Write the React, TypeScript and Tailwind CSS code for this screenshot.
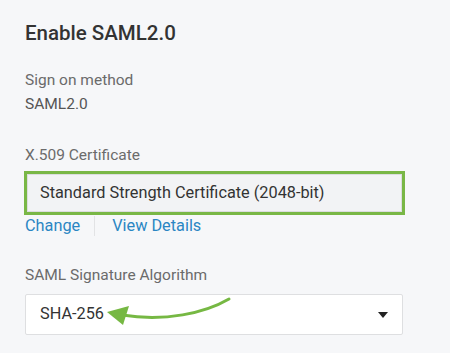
export default function App() {
  return (
    <div className="relative w-[450px] h-[353px] overflow-hidden bg-[#f6f7f9] font-['Roboto',sans-serif]">
      <div className="px-[25px] pt-[20px] flex flex-col">
        <h1 className="text-[20.5px] leading-[26px] font-medium text-[#333]">Enable SAML2.0</h1>

        <div className="mt-[24px] text-[15.5px] leading-[20px] text-[#6b6b6b]">Sign on method</div>
        <div className="mt-[4px] text-[15.5px] leading-[20px] text-[#555]">SAML2.0</div>

        <div className="mt-[31px] text-[15.5px] leading-[20px] text-[#6b6b6b]">X.509 Certificate</div>
        <div className="mt-[6px] -ml-px w-[381px] h-[44px] border-[3px] border-[#79b746]">
          <div className="h-full border border-[#dcdddf] bg-[#f2f3f5] pl-[12px] flex items-center text-[16.3px] text-[#333]">
            Standard Strength Certificate (2048-bit)
          </div>
        </div>
        <div className="mt-[1px] flex items-center text-[16.3px] leading-[20px] text-[#2a86c3]">
          <span className="pr-[14px]">Change</span>
          <span className="w-px h-[20px] bg-[#e2e3e5]" />
          <span className="pl-[17px]">View Details</span>
        </div>

        <div className="mt-[29px] text-[15.5px] leading-[20px] text-[#6b6b6b]">SAML Signature Algorithm</div>
        <div className="mt-[9px] w-[378px] h-[41px] rounded-[2px] border border-[#dedfe1] bg-white flex items-center justify-between pl-[14px] pr-[14px] text-[16.3px] text-[#333]">
          <span>SHA-256</span>
          <svg width="10" height="6" viewBox="0 0 10 6">
            <path d="M0 0 L10 0 L5 6 Z" fill="#222" />
          </svg>
        </div>
      </div>

      <svg className="absolute inset-0 pointer-events-none" width="450" height="353" viewBox="0 0 450 353">
        <path d="M229 299 C205 313 165 322 122 315" fill="none" stroke="#76b843" strokeWidth="3" strokeLinecap="round" />
        <path d="M107 312 L129 306 L123 325 Z" fill="#76b843" />
      </svg>
    </div>
  );
}
